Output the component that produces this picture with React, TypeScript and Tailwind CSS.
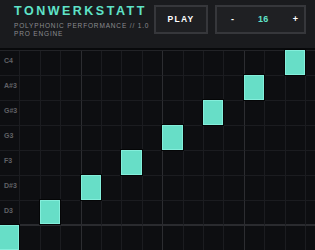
const ROWS = ['C4', 'A#3', 'G#3', 'G3', 'F3', 'D#3', 'D3', 'C3'];
const STEPS = 16;

// step index -> row index
const notes: Record<number, number> = { 0: 7, 2: 6, 4: 5, 6: 4, 8: 3, 10: 2, 12: 1, 14: 0 };

export default function App() {
  return (
    <div className="w-[315px] h-[250px] overflow-hidden bg-[#0d0e11] font-['Liberation_Sans',Arial,sans-serif]">
      <header className="h-[50px] flex items-start justify-between pl-[14px] pr-[9px] pt-[5px] bg-[#1a1b1e] border-b-[2px] border-[#08090b]">
        <div className="min-w-0">
          <h1 className="text-[12.5px] leading-[12.5px] font-bold tracking-[0.2em] text-[#5fe3c8] whitespace-nowrap">TONWERKSTATT</h1>
          <p className="mt-[4px] w-[138px] text-[6.5px] leading-[8.6px] tracking-[0.13em] text-[#8a8b8f]">
            POLYPHONIC PERFORMANCE // 1.0 PRO ENGINE
          </p>
        </div>
        <div className="flex gap-[7px] shrink-0">
          <button className="w-[54px] h-[29px] border-2 border-[#36373b] bg-[#1e1f22] text-white text-[8.5px] font-bold tracking-[0.15em]">
            PLAY
          </button>
          <div className="w-[91px] h-[29px] border-2 border-[#36373b] bg-[#1f2023] flex items-center justify-between pl-[14px] pr-[6px] text-[9px] font-bold">
            <span className="text-white">-</span>
            <span className="text-[#5fe3c8] tracking-[0.05em]">16</span>
            <span className="text-white">+</span>
          </div>
        </div>
      </header>

      <div className="relative border-t border-[#222327]">
        <div className="absolute left-0 top-0 pointer-events-none">
          {ROWS.map((row) => (
            <div key={row} className="h-[25px] flex items-center pl-[4px] pb-[4px] text-[7px] font-bold text-[#606166]">
              {row}
            </div>
          ))}
        </div>
        <div className="grid grid-cols-[repeat(16,20.42px)] grid-rows-[repeat(8,25px)] w-[327px]">
          {ROWS.map((row, r) =>
            Array.from({ length: STEPS }).map((_, c) => (
              <div
                key={row + c}
                className={`relative border-b ${r === 6 ? 'border-b-[#2a2b2f] border-b-2' : 'border-b-[#1b1c20]'} border-r ${
                  c % 4 === 3 ? 'border-r-[#2c2d31]' : 'border-r-[#1b1c20]'
                }`}
              >
                {notes[c] === r && (
                  <div className="absolute inset-0 -mt-px -ml-px bg-[#67dec7] border border-[#84eedb] shadow-[0_0_0_1px_#050607]" />
                )}
              </div>
            ))
          )}
        </div>
      </div>
    </div>
  );
}
